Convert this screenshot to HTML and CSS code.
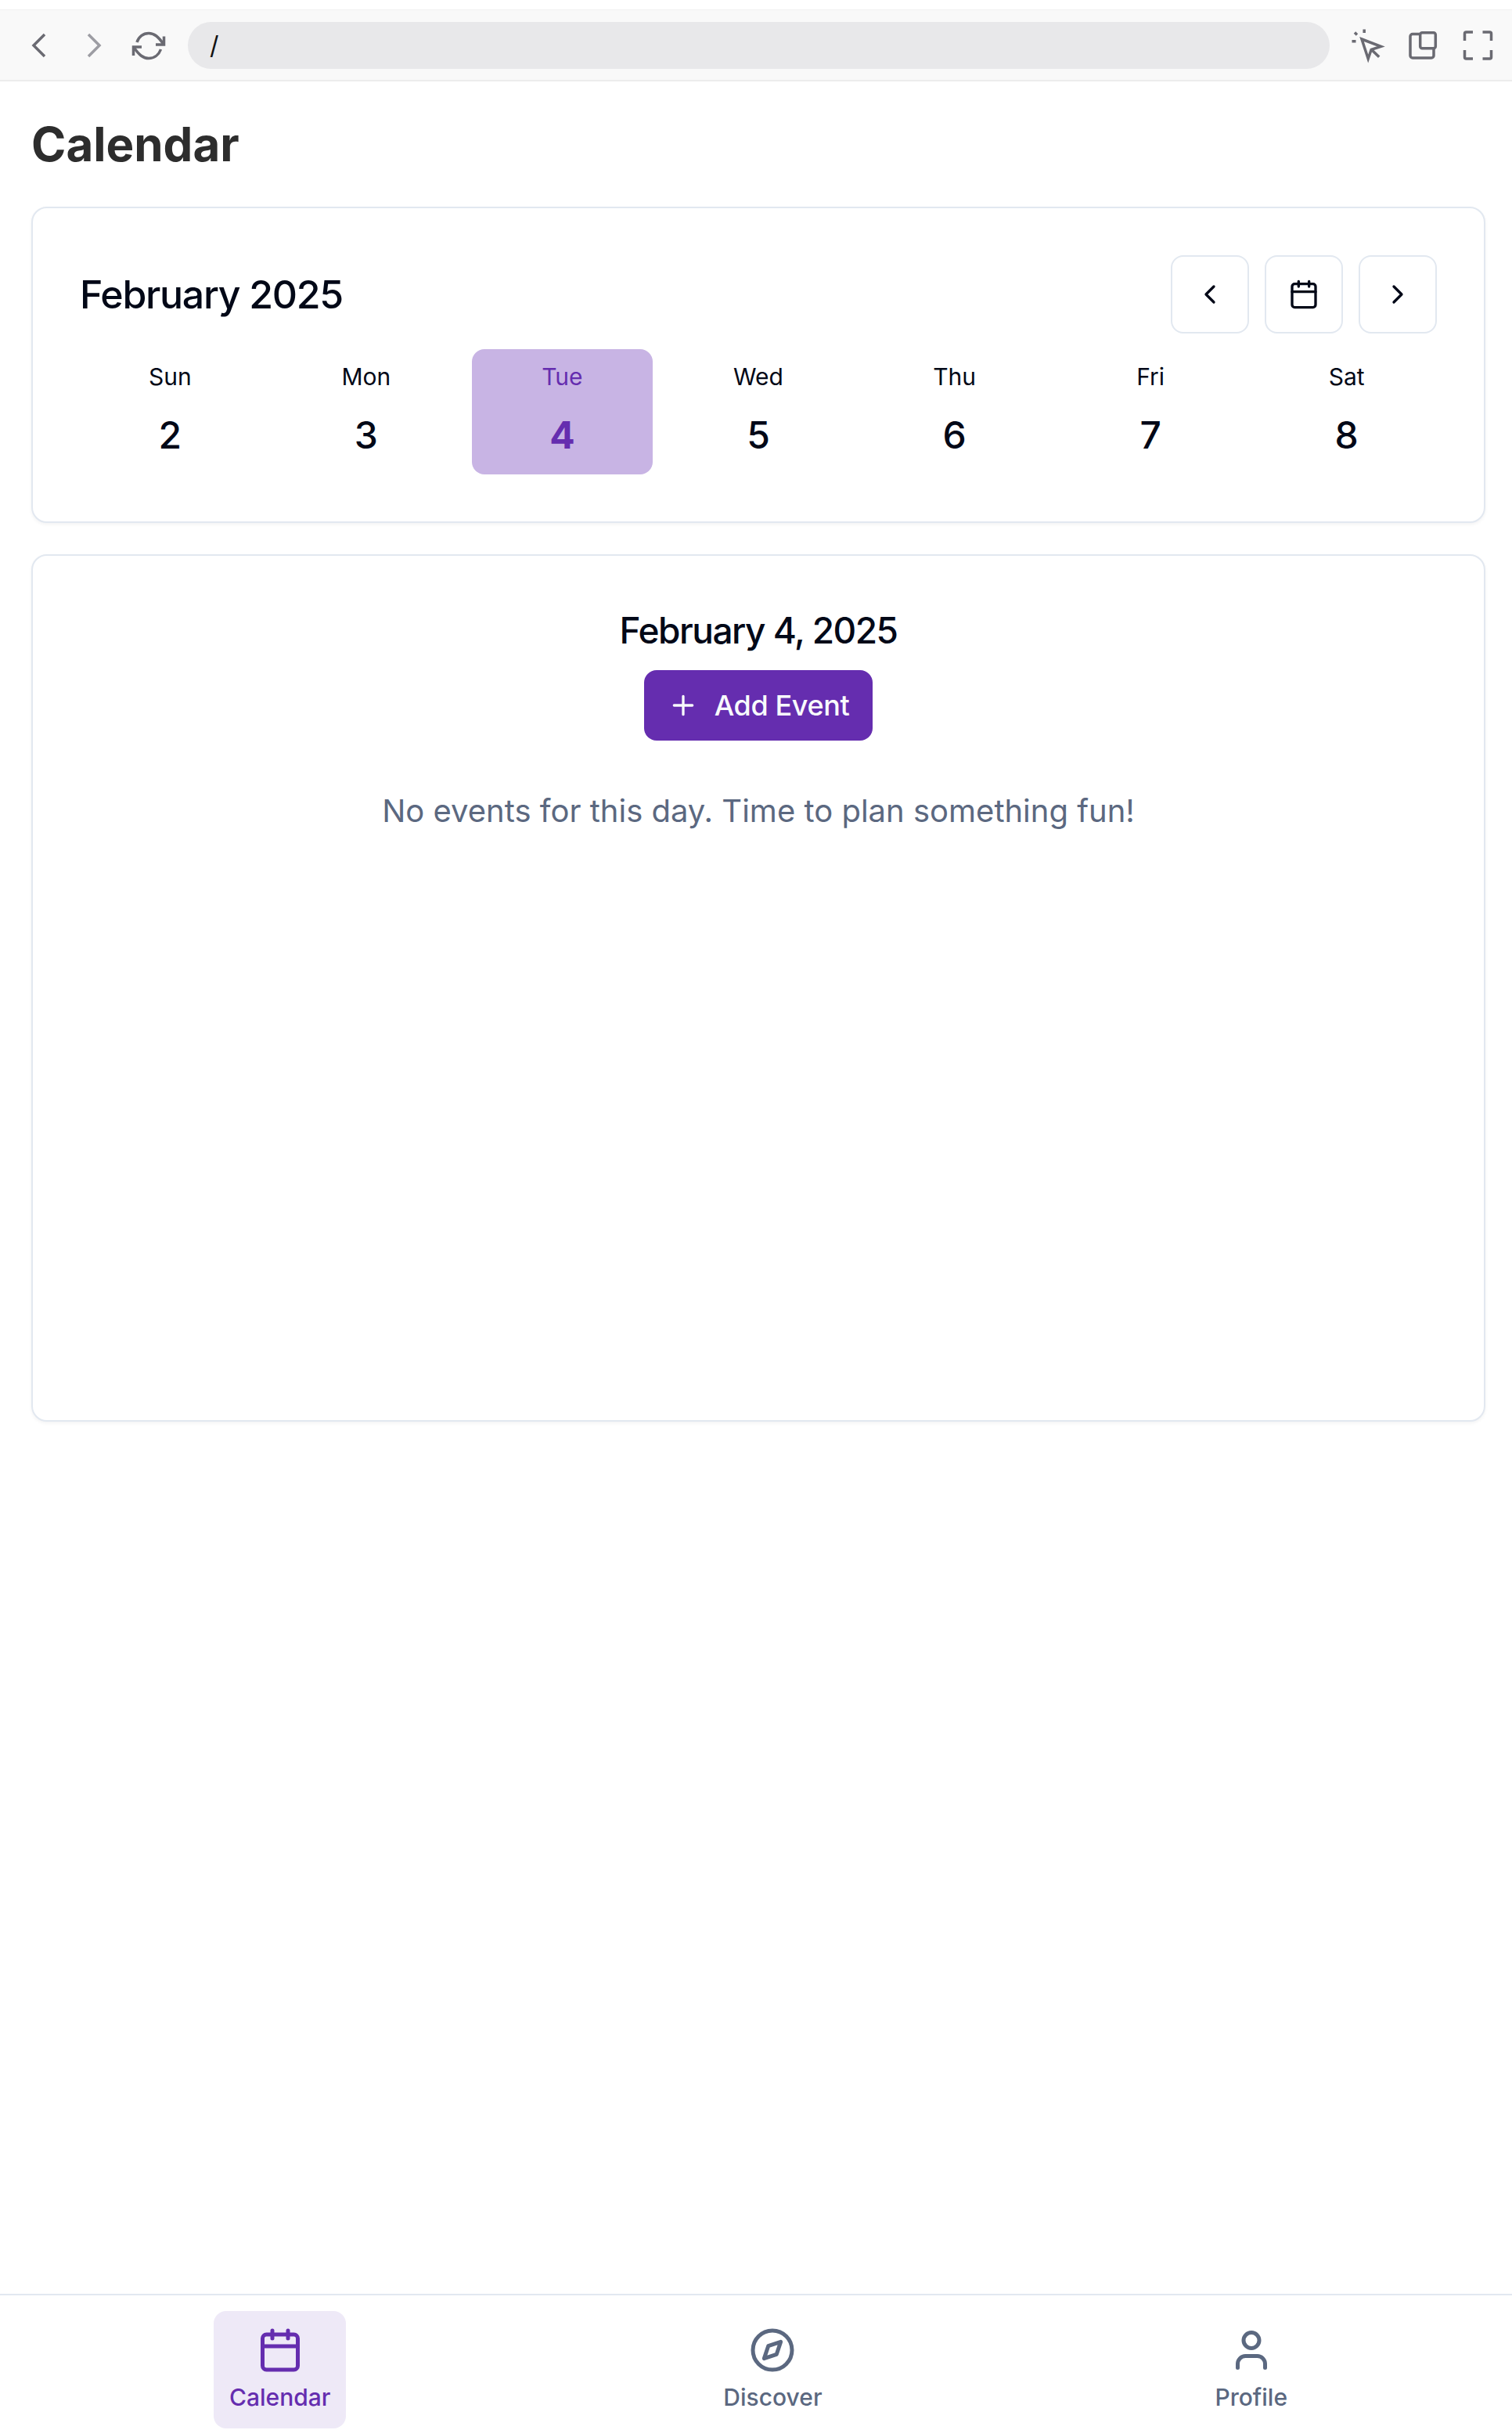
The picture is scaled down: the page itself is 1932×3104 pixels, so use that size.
FILE: index.html
```html
<!DOCTYPE html>
<html lang="en">

<head>
    <meta charset="UTF-8">
    <title>Calendar</title>
    <link rel="stylesheet" href="styles.css">
</head>

<body>
    <div id="app">
        <header class="browser-bar">
            <svg class="bar-icon" viewBox="0 0 48 48"><path d="M31 10 17 24l14 14" /></svg>
            <svg class="bar-icon faded" viewBox="0 0 48 48"><path d="m17 10 14 14-14 14" /></svg>
            <svg class="bar-icon" viewBox="0 0 48 48">
                <path d="M9 20C11 13 17 8.500 24 8.500c7 0 12 4 19 14" />
                <path d="M43.500 12.500V23H33" />
                <path d="M39.500 29C37 36 31 40.500 24 40.500c-7 0-12-4-19-14" />
                <path d="M4.500 37V26H15" />
            </svg>
            <div class="url-field">/</div>
            <svg class="bar-icon" viewBox="0 0 48 48">
                <path d="M16 16 40.500 25.300l-12.300 4-4 11.700z" />
                <path d="m28.500 29.500 9.700 9.200" />
                <path d="M19.200 3.500v4.500M7 7.500l3 3M3.500 18.700h5" />
            </svg>
            <svg class="bar-icon" viewBox="0 0 48 48">
                <rect x="20.700" y="7.700" width="19.600" height="20" rx="2.500" />
                <path d="M20.700 9.500H11a3 3 0 0 0-3 3V37a3 3 0 0 0 3 3h24a3 3 0 0 0 3-3v-8" />
            </svg>
            <svg class="bar-icon" viewBox="0 0 48 48">
                <path d="M7.500 18V9a2 2 0 0 1 2-2h8.500" />
                <path d="M30.500 7h9a2 2 0 0 1 2 2v9" />
                <path d="M41.500 30v9a2 2 0 0 1-2 2h-9" />
                <path d="M18 41H9.500a2 2 0 0 1-2-2v-9" />
            </svg>
        </header>

        <main class="content">
            <h1 class="page-title">Calendar</h1>

            <section class="card week-card">
                <div class="week-head">
                    <h2 class="month-title">February 2025</h2>
                    <div class="week-controls">
                        <button class="icon-btn">
                            <svg class="lucide" viewBox="0 0 24 24"><path d="m15 18-6-6 6-6" /></svg>
                        </button>
                        <button class="icon-btn">
                            <svg class="lucide" viewBox="0 0 24 24">
                                <path d="M8 2v4M16 2v4" />
                                <rect x="3" y="4" width="18" height="18" rx="2" />
                                <path d="M3 10h18" />
                            </svg>
                        </button>
                        <button class="icon-btn">
                            <svg class="lucide" viewBox="0 0 24 24"><path d="m9 18 6-6-6-6" /></svg>
                        </button>
                    </div>
                </div>
                <div class="week-days">
                    <div class="day"><span class="day-name">Sun</span><span class="day-num">2</span></div>
                    <div class="day"><span class="day-name">Mon</span><span class="day-num">3</span></div>
                    <div class="day active"><span class="day-name">Tue</span><span class="day-num">4</span></div>
                    <div class="day"><span class="day-name">Wed</span><span class="day-num">5</span></div>
                    <div class="day"><span class="day-name">Thu</span><span class="day-num">6</span></div>
                    <div class="day"><span class="day-name">Fri</span><span class="day-num">7</span></div>
                    <div class="day"><span class="day-name">Sat</span><span class="day-num">8</span></div>
                </div>
            </section>

            <section class="card events-card">
                <h3 class="events-date">February 4, 2025</h3>
                <button class="add-btn">
                    <svg class="lucide" viewBox="0 0 24 24"><path d="M5 12h14M12 5v14" /></svg>
                    Add Event
                </button>
                <p class="events-empty">No events for this day. Time to plan something fun!</p>
            </section>
        </main>

        <nav class="tabs">
            <a class="tab active">
                <svg class="tab-icon" viewBox="0 0 24 24">
                    <path d="M8 2v4M16 2v4" />
                    <rect x="3" y="4" width="18" height="18" rx="2" />
                    <path d="M3 10h18" />
                </svg>
                Calendar
            </a>
            <a class="tab">
                <svg class="tab-icon" viewBox="0 0 24 24">
                    <circle cx="12" cy="12" r="10" />
                    <path d="m16.240 7.760-2.120 6.360-6.360 2.120 2.120-6.360z" />
                </svg>
                Discover
            </a>
            <a class="tab">
                <svg class="tab-icon" viewBox="0 0 24 24">
                    <path d="M19 21v-2a4 4 0 0 0-4-4H9a4 4 0 0 0-4 4v2" />
                    <circle cx="12" cy="7" r="4" />
                </svg>
                Profile
            </a>
        </nav>
    </div>
</body>

</html>
```
FILE: styles.css
```css
* {
    box-sizing: border-box;
}

body {
    margin: 0;
    padding: 0;
    font-family: 'Inter', 'Liberation Sans', sans-serif;
    background: #ffffff;
    color: #020817;
}

#app {
    display: flex;
    flex-direction: column;
    min-height: 100vh;
    padding-top: 12px;
}

.browser-bar {
    display: flex;
    align-items: center;
    gap: 22px;
    height: 92px;
    padding: 0 20px 0 26px;
    background: #f9f9f9;
    border-top: 1px solid #f1f1f1;
    border-bottom: 2px solid #ececec;
}

.bar-icon {
    flex: none;
    width: 48px;
    height: 48px;
    fill: none;
    stroke: #6a6a72;
    stroke-width: 3.5;
}

.bar-icon.faded {
    stroke: #9d9da3;
}

.url-field {
    flex: 1;
    height: 60px;
    margin: 0 3px 0 4px;
    padding-left: 28px;
    border-radius: 30px;
    background: #e8e8ea;
    color: #111111;
    font-size: 32px;
    line-height: 60px;
}

.content {
    flex: 1;
    padding: 44px 34px 0 40px;
}

.page-title {
    margin: 0 0 44px;
    color: #2d2d2d;
    font-size: 60px;
    font-weight: 700;
    line-height: 72px;
}

.card {
    background: #ffffff;
    border: 2px solid #e2e8f0;
    border-radius: 20px;
    box-shadow: 0 2px 4px rgba(15, 23, 42, 0.05);
}

.week-card {
    padding: 60px;
    margin-bottom: 40px;
}

.week-head {
    display: flex;
    justify-content: space-between;
    align-items: center;
    margin-bottom: 20px;
}

.month-title {
    margin: 0;
    font-size: 50px;
    font-weight: 500;
    letter-spacing: -1.3px;
}

.week-controls {
    display: flex;
    gap: 20px;
}

.icon-btn {
    display: flex;
    justify-content: center;
    align-items: center;
    width: 100px;
    height: 100px;
    padding: 0;
    background: #ffffff;
    border: 2px solid #e2e8f0;
    border-radius: 16px;
    color: #020817;
}

.lucide {
    width: 40px;
    height: 40px;
    fill: none;
    stroke: currentColor;
    stroke-width: 2;
    stroke-linecap: round;
    stroke-linejoin: round;
}

.week-days {
    display: grid;
    grid-template-columns: repeat(7, 1fr);
    gap: 20px;
}

.day {
    display: flex;
    flex-direction: column;
    align-items: center;
    height: 160px;
    padding-top: 15px;
    border-radius: 16px;
}

.day-name {
    font-size: 30px;
    line-height: 40px;
}

.day-num {
    margin-top: 27px;
    font-size: 48px;
    font-weight: 500;
    line-height: 56px;
}

.day.active {
    background: #c8b4e4;
    color: #652daf;
}

.day.active .day-num {
    font-weight: 700;
}

.events-card {
    display: flex;
    flex-direction: column;
    align-items: center;
    height: 1108px;
    padding-top: 64px;
}

.events-date {
    margin: 0 0 20px;
    font-size: 46px;
    font-weight: 500;
    letter-spacing: -1.5px;
    line-height: 62px;
}

.add-btn {
    display: flex;
    align-items: center;
    gap: 20px;
    height: 90px;
    padding: 0 30px;
    background: #652daf;
    border: none;
    border-radius: 16px;
    color: #f8fafc;
    font-family: inherit;
    font-size: 36px;
    font-weight: 500;
    letter-spacing: -0.4px;
}

.events-empty {
    margin: 66px 0 0;
    color: #5b6880;
    font-size: 40px;
    line-height: 48px;
}

.tabs {
    display: flex;
    justify-content: space-around;
    height: 174px;
    padding: 20px 36px 2px 42px;
    border-top: 2px solid #e2e8f0;
    background: #ffffff;
}

.tab {
    display: flex;
    flex-direction: column;
    align-items: center;
    gap: 8px;
    padding: 20px 20px 0;
    border-radius: 16px;
    color: #5b6880;
    font-size: 30px;
    font-weight: 500;
    line-height: 44px;
}

.tab.active {
    background: #eee9f7;
    color: #652daf;
}

.tab-icon {
    width: 60px;
    height: 60px;
    fill: none;
    stroke: currentColor;
    stroke-width: 2;
    stroke-linecap: round;
    stroke-linejoin: round;
}
```
